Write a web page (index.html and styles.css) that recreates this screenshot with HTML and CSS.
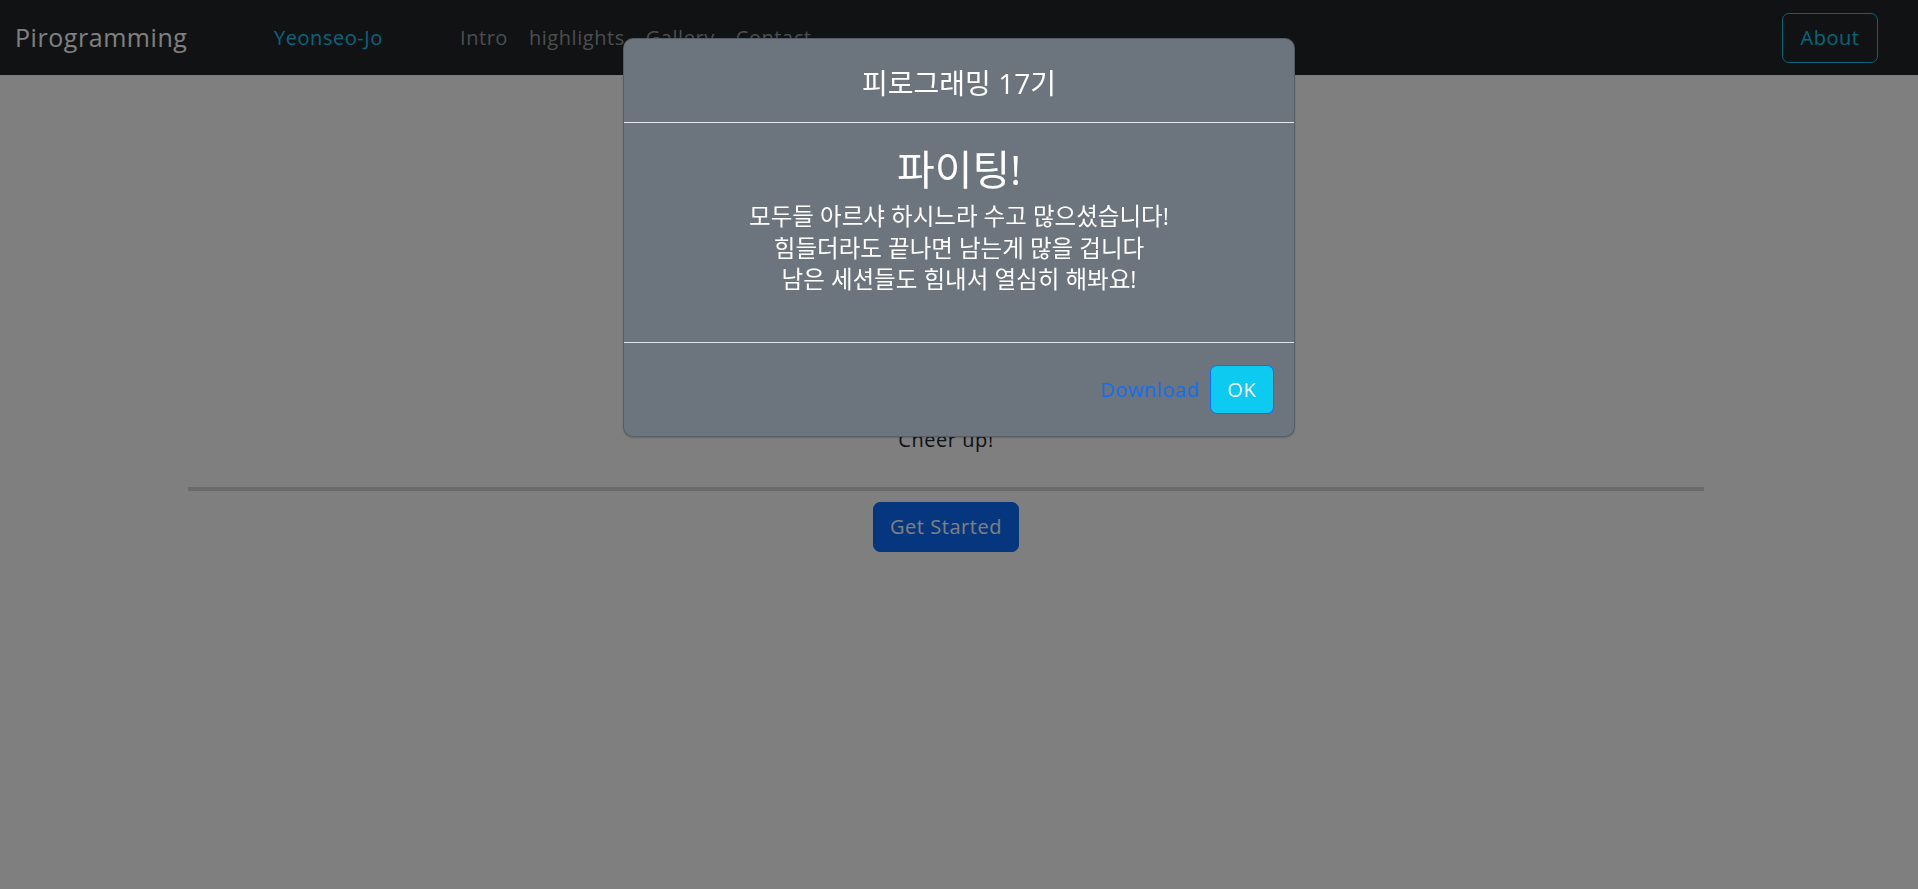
FILE: index.html
```html
<!DOCTYPE html>
<html lang="ko">
<head>
<meta charset="utf-8">
<title>Pirogramming</title>
<link rel="stylesheet" href="styles.css">
</head>
<body>
<nav class="navbar">
  <a class="brand" href="#">Pirogramming</a>
  <a class="name" href="#">Yeonseo-Jo</a>
  <ul class="nav-links">
    <li><a href="#">Intro</a></li>
    <li><a href="#">highlights</a></li>
    <li><a href="#">Gallery</a></li>
    <li><a href="#">Contact</a></li>
  </ul>
  <button class="about-btn" type="button">About</button>
</nav>

<main class="content">
  <p class="cheer">Cheer up!</p>
  <hr class="divider">
  <button class="start-btn" type="button">Get Started</button>
</main>

<div class="backdrop"></div>

<div class="modal">
  <div class="modal-header">
    <h5 class="modal-title">피로그래밍 17기</h5>
  </div>
  <div class="modal-body">
    <h2 class="modal-heading">파이팅!</h2>
    <p class="modal-text">모두들 아르샤 하시느라 수고 많으셨습니다!<br>힘들더라도 끝나면 남는게 많을 겁니다<br>남은 세션들도 힘내서 열심히 해봐요!</p>
  </div>
  <div class="modal-footer">
    <a class="download" href="#">Download</a>
    <button class="ok-btn" type="button">OK</button>
  </div>
</div>
</body>
</html>
```

FILE: styles.css
```css
* {
  box-sizing: border-box;
}

html, body {
  margin: 0;
  padding: 0;
  height: 100%;
}

body {
  background: #ffffff;
  color: #212529;
  font-family: "Open Sans", "Noto Sans CJK KR", sans-serif;
  font-size: 20px;
  line-height: 1.5;
  letter-spacing: 0.55px;
  overflow: hidden;
}

a {
  text-decoration: none;
}

/* ---------- Navbar ---------- */
.navbar {
  height: 75px;
  background: #212529;
  display: flex;
  align-items: center;
  padding: 0 40px 0 15px;
}

.brand {
  width: 259px;
  font-size: 25px;
  color: #ffffff;
  white-space: nowrap;
}

.name {
  width: 186px;
  color: #0dcaf0;
  white-space: nowrap;
}

.nav-links {
  list-style: none;
  margin: 0;
  padding: 0;
  display: flex;
  gap: 21px;
  flex: 1;
}

.nav-links a {
  color: rgba(255, 255, 255, 0.55);
}

.about-btn {
  font-family: inherit;
  font-size: 20px;
  letter-spacing: 0.55px;
  line-height: 30px;
  color: #0dcaf0;
  background: transparent;
  border: 1px solid #0dcaf0;
  border-radius: 7px;
  padding: 0;
  width: 96px;
  height: 50px;
}

/* ---------- Page content ---------- */
.content {
  margin: 0 214px 0 188px;
  padding-top: 350px;
  text-align: center;
}

.cheer {
  margin: 0;
  color: #212529;
  line-height: 30px;
}

.divider {
  margin: 32px 0 11px;
  border: 0;
  height: 4px;
  background: #d7d7d7;
}

.start-btn {
  font-family: inherit;
  font-size: 20px;
  letter-spacing: 0.55px;
  line-height: 30px;
  color: #ffffff;
  background: #0d6efd;
  border: 1px solid #0d6efd;
  border-radius: 7px;
  height: 50px;
  width: 146px;
  padding: 0;
}

/* ---------- Modal ---------- */
.backdrop {
  position: fixed;
  inset: 0;
  background: rgba(0, 0, 0, 0.5);
}

.modal {
  position: fixed;
  top: 38px;
  left: 50%;
  transform: translateX(-50%);
  width: 672px;
  background: #6c757d;
  border: 1px solid rgba(0, 0, 0, 0.2);
  border-radius: 10px;
  box-shadow: 0 1px 2px rgba(0, 0, 0, 0.2);
  color: #ffffff;
  text-align: center;
  display: flex;
  flex-direction: column;
}

.modal-header {
  height: 84px;
  border-bottom: 1px solid #e3e7ec;
  display: flex;
  align-items: center;
  justify-content: center;
  padding-top: 4px;
}

.modal-title {
  margin: 0;
  font-size: 28px;
  font-weight: 400;
  line-height: 34px;
  letter-spacing: 0;
}

.modal-body {
  height: 219px;
  padding: 21px 20px 0;
  letter-spacing: 0;
}

.modal-heading {
  margin: 0 0 7px;
  font-size: 41px;
  font-weight: 400;
  line-height: 50px;
}

.modal-text {
  margin: 0;
  font-size: 23.5px;
  line-height: 31.7px;
}

.modal-footer {
  height: 94px;
  border-top: 1px solid #d9e3ee;
  display: flex;
  align-items: center;
  justify-content: flex-end;
  gap: 10px;
  padding: 0 20px 0 0;
}

.download {
  color: #0d6efd;
  font-size: 20px;
}

.ok-btn {
  font-family: inherit;
  font-size: 20px;
  letter-spacing: 0.55px;
  line-height: 30px;
  color: #ffffff;
  background: #0dcaf0;
  border: 1px solid #0d6efd;
  border-radius: 7px;
  width: 64px;
  height: 49px;
  padding: 0;
}
```
